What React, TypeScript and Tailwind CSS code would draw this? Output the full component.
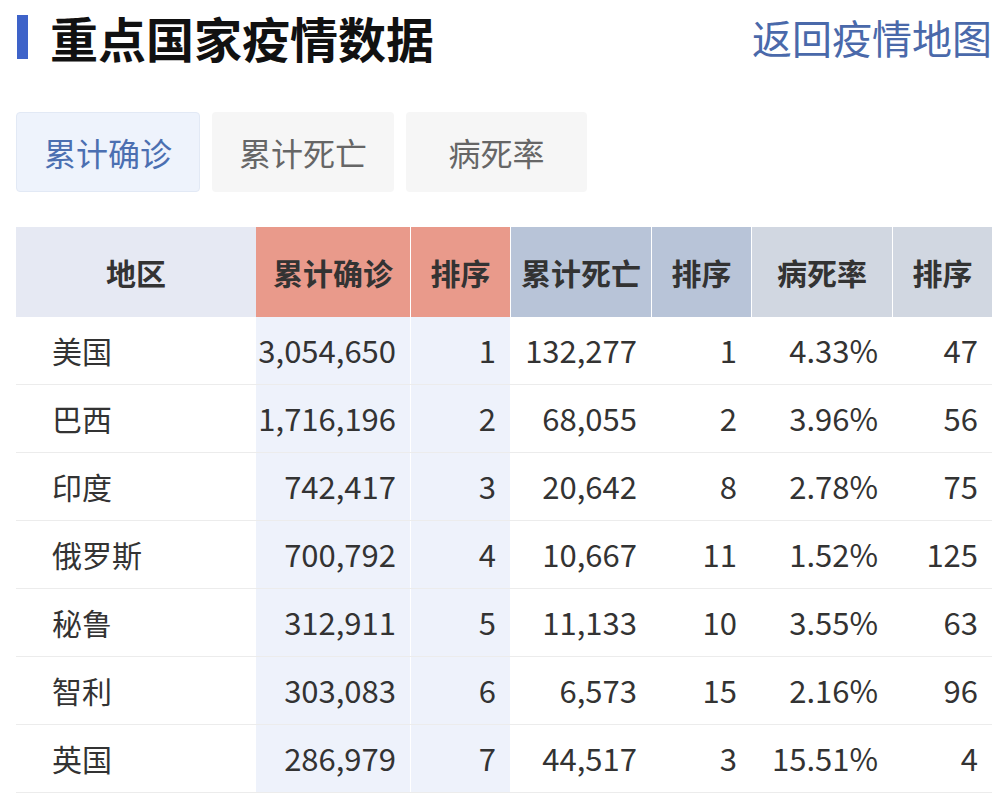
import React from "react";

const rows = [
  ["美国", "3,054,650", "1", "132,277", "1", "4.33%", "47"],
  ["巴西", "1,716,196", "2", "68,055", "2", "3.96%", "56"],
  ["印度", "742,417", "3", "20,642", "8", "2.78%", "75"],
  ["俄罗斯", "700,792", "4", "10,667", "11", "1.52%", "125"],
  ["秘鲁", "312,911", "5", "11,133", "10", "3.55%", "63"],
  ["智利", "303,083", "6", "6,573", "15", "2.16%", "96"],
  ["英国", "286,979", "7", "44,517", "3", "15.51%", "4"],
];

const headers: [string, string][] = [
  ["地区", "bg-[#e6e9f3]"],
  ["累计确诊", "bg-[#e99a8b]"],
  ["排序", "bg-[#e99a8b] border-l border-white"],
  ["累计死亡", "bg-[#b8c4d8] border-l border-white"],
  ["排序", "bg-[#b8c4d8] border-l border-white"],
  ["病死率", "bg-[#d1d7e1] border-l border-white"],
  ["排序", "bg-[#d1d7e1] border-l border-white"],
];

const grid = "grid grid-cols-[240px_154px_100px_141px_100px_141px_100px]";

export default function App() {
  return (
    <div
      className="w-[1000px] h-[801px] bg-white overflow-hidden pl-4 pr-2 text-[#333]"
      style={{ fontFamily: '"Noto Sans CJK SC", "Noto Sans", sans-serif' }}
    >
      <div className="flex items-center justify-between h-[74px]">
        <div className="flex items-center">
          <div className="w-[11px] h-[44px] bg-[#3e63c9] ml-[1px] mr-[22px]" />
          <div className="text-[48px] font-bold text-[#111] leading-none">重点国家疫情数据</div>
        </div>
        <div className="text-[40px] text-[#4a69aa] leading-none">返回疫情地图</div>
      </div>
      <div className="flex gap-3 mt-[38px] h-[80px]">
        <div className="w-[184px] rounded bg-[#eef3fc] border border-[#e2e9f5] flex items-center justify-center text-[32px] text-[#4b6fb1]">
          累计确诊
        </div>
        <div className="w-[182px] rounded bg-[#f6f6f6] flex items-center justify-center text-[32px] text-[#666]">
          累计死亡
        </div>
        <div className="w-[181px] rounded bg-[#f6f6f6] flex items-center justify-center text-[32px] text-[#666]">
          病死率
        </div>
      </div>
      <div className="mt-[35px] w-[976px]">
        <div className={`${grid} h-[90px]`}>
          {headers.map(([h, c], i) => (
            <div key={i} className={`${c} flex items-center justify-center text-[30px] font-bold text-[#333]`}>
              {h}
            </div>
          ))}
        </div>
        {rows.map((r, ri) => (
          <div key={ri} className={`${grid} h-[68px] border-b border-[#ececec] text-[31px]`}>
            <div className="flex items-center pl-9 text-[30px]">{r[0]}</div>
            <div className="flex items-center justify-end pr-[14px] bg-[#eef2fb]">{r[1]}</div>
            <div className="flex items-center justify-end pr-[14px] bg-[#eef2fb] border-l border-white">{r[2]}</div>
            <div className="flex items-center justify-end pr-[14px]">{r[3]}</div>
            <div className="flex items-center justify-end pr-[14px]">{r[4]}</div>
            <div className="flex items-center justify-end pr-[14px]">{r[5]}</div>
            <div className="flex items-center justify-end pr-[14px]">{r[6]}</div>
          </div>
        ))}
      </div>
    </div>
  );
}
